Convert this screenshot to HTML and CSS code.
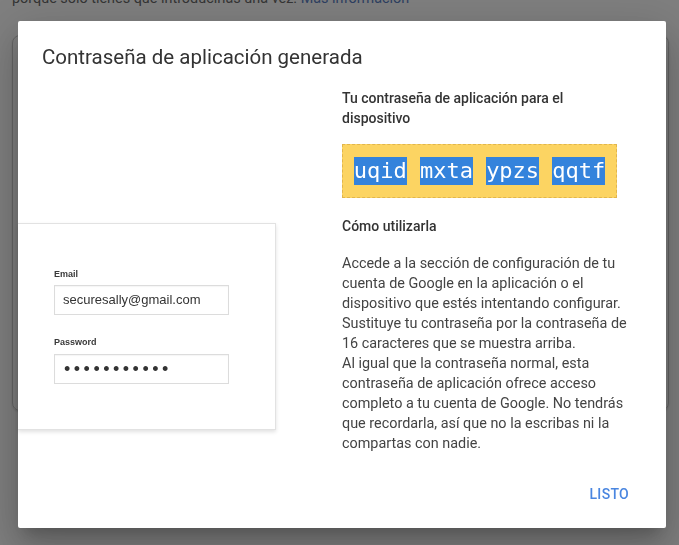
FILE: index.html
```html
<!DOCTYPE html>
<html lang="es">
<head>
<meta charset="utf-8">
<title>Contraseña de aplicación generada</title>
<link rel="stylesheet" href="styles.css">
</head>
<body>
<div class="page">
  <p class="intro">porque solo tienes que introducirlas una vez. <a class="intro-link" href="#">Más información</a></p>
  <div class="bg-card"></div>
</div>
<div class="scrim"></div>
<div class="dialog" role="dialog">
  <h1 class="dialog-title">Contraseña de aplicación generada</h1>
  <div class="dialog-body">
    <div class="illus">
      <div class="illus-card">
        <div class="field-label">Email</div>
        <div class="field-input">securesally@gmail.com</div>
        <div class="field-label field-label-2">Password</div>
        <div class="field-input field-dots">•••••••••••</div>
      </div>
    </div>
    <div class="info">
      <h2 class="info-heading">Tu contraseña de aplicación para el dispositivo</h2>
      <div class="pw-box"><span class="pw-word">uqid</span> <span class="pw-word">mxta</span> <span class="pw-word">ypzs</span> <span class="pw-word">qqtf</span></div>
      <h2 class="info-heading info-heading-2">Cómo utilizarla</h2>
      <p class="info-text">Accede a la sección de configuración de tu cuenta de Google en la aplicación o el dispositivo que estés intentando configurar. Sustituye tu contraseña por la contraseña de 16 caracteres que se muestra arriba.<br>Al igual que la contraseña normal, esta contraseña de aplicación ofrece acceso completo a tu cuenta de Google. No tendrás que recordarla, así que no la escribas ni la compartas con nadie.</p>
    </div>
  </div>
  <div class="dialog-actions">
    <button class="btn-text" type="button">Listo</button>
  </div>
</div>
</body>
</html>
```

FILE: styles.css
```css
html, body {
  margin: 0;
  padding: 0;
  background: #ffffff;
  height: 100%;
  overflow: hidden;
}

body {
  font-family: Roboto, "Liberation Sans", Arial, sans-serif;
}

.page {
  padding: 0 10px 0 12px;
}

.intro {
  margin: -11px 0 0;
  font-size: 14.4px;
  line-height: 20px;
  color: #6a6a6a;
}

.intro-link {
  color: #5c7fc4;
  text-decoration: none;
}

.bg-card {
  margin-top: 26px;
  height: 374px;
  border: 1px solid #c9c9c9;
  border-radius: 8px;
  box-shadow: 0 1px 2px rgba(0, 0, 0, 0.15);
}

.scrim {
  position: fixed;
  inset: 0;
  background: rgba(0, 0, 0, 0.5);
}

.dialog {
  position: fixed;
  left: 18px;
  top: 21px;
  width: 648px;
  box-sizing: border-box;
  padding: 24px 24px 16px;
  background: #ffffff;
  border-radius: 2px;
  box-shadow: 0 11px 15px -7px rgba(0, 0, 0, 0.2), 0 24px 38px 3px rgba(0, 0, 0, 0.14), 0 9px 46px 8px rgba(0, 0, 0, 0.12);
}

.dialog-title {
  margin: 0 0 19px;
  font-size: 20.5px;
  line-height: 24px;
  font-weight: 400;
  color: #333333;
}

.dialog-body {
  display: flex;
  gap: 66px;
}

.illus {
  flex: 0 0 258px;
  margin-left: -24px;
}

.illus-card {
  margin-top: 135px;
  height: 207px;
  box-sizing: border-box;
  padding: 44px 0 0 36px;
  background: #ffffff;
  border: 1px solid #e2e2e2;
  border-left: none;
  box-shadow: 0 2px 4px rgba(0, 0, 0, 0.12);
  font-family: "Liberation Sans", Arial, sans-serif;
}

.field-label {
  font-size: 9px;
  line-height: 12px;
  font-weight: 700;
  color: #3a3a3a;
  margin-bottom: 5px;
}

.field-label-2 {
  margin-top: 21px;
  margin-bottom: 6px;
}

.field-input {
  width: 175px;
  height: 30px;
  box-sizing: border-box;
  padding-left: 8px;
  border: 1px solid #dcdcdc;
  box-shadow: inset 0 1px 1px rgba(0, 0, 0, 0.04);
  font-size: 13px;
  line-height: 28px;
  color: #333333;
}

.field-dots {
  font-size: 18px;
  letter-spacing: 3.5px;
  color: #333333;
  padding-left: 9px;
}

.info {
  flex: 0 0 290px;
}

.info-heading {
  margin: 0 0 16px;
  font-size: 14px;
  line-height: 20px;
  font-weight: 500;
  color: #333333;
}

.info-heading-2 {
  margin-bottom: 18px;
}

.pw-box {
  width: 275px;
  height: 54px;
  box-sizing: border-box;
  margin-bottom: 18px;
  padding-top: 12px;
  background: #fcd462;
  border: 1px dashed #e2b64c;
  text-align: center;
  font-family: "DejaVu Sans Mono", "Liberation Mono", monospace;
  font-size: 22px;
  line-height: 28px;
  color: #ffffff;
  white-space: nowrap;
}

.pw-word {
  display: inline-block;
  height: 28px;
  line-height: 28px;
  background: #3483dc;
}

.info-text {
  margin: 0;
  font-size: 14.4px;
  line-height: 20px;
  color: #444444;
}

.dialog-actions {
  display: flex;
  justify-content: flex-end;
  margin-top: 22px;
  padding-right: 5px;
}

.btn-text {
  height: 36px;
  padding: 0 8px;
  border: none;
  background: transparent;
  font-family: Roboto, "Liberation Sans", Arial, sans-serif;
  font-size: 14px;
  font-weight: 500;
  text-transform: uppercase;
  letter-spacing: 0.3px;
  color: #4a86e0;
  cursor: pointer;
}
```
